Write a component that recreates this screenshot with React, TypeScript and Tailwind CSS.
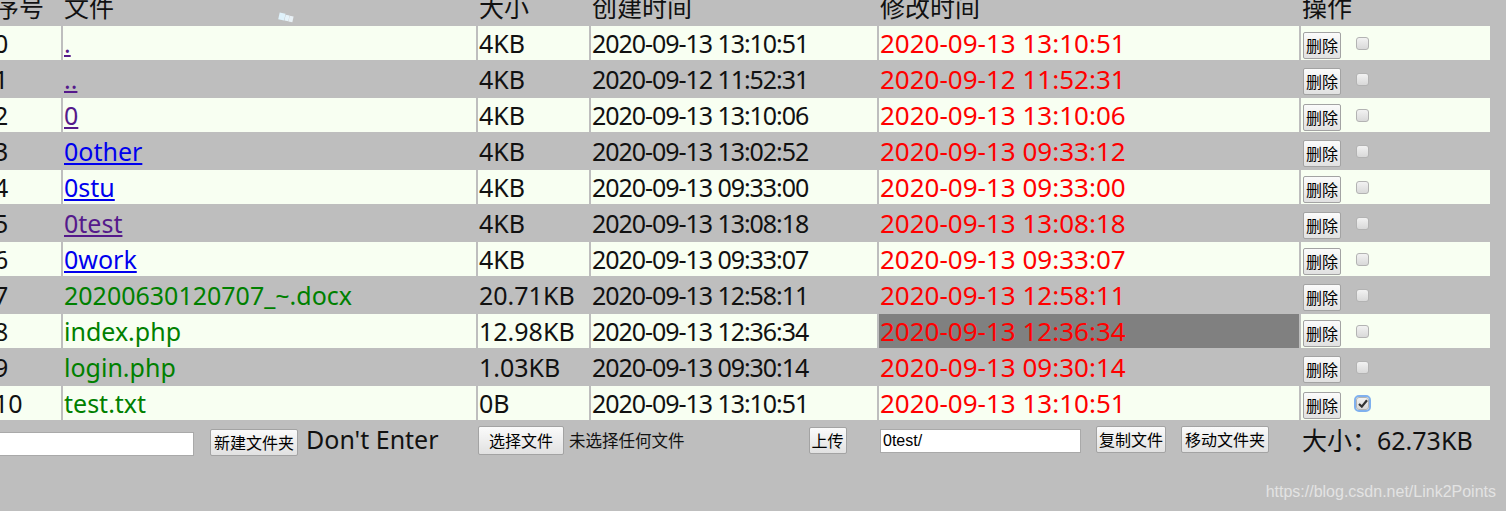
import clsx from "clsx";

type Row = {
    no: number;
    name: string;
    kind: "visited" | "link" | "file";
    size: string;
    created: string;
    modified: string;
    hover?: boolean;
    checked?: boolean;
};

const rows: Row[] = [
    { no: 0, name: ".", kind: "visited", size: "4KB", created: "2020-09-13 13:10:51", modified: "2020-09-13 13:10:51" },
    { no: 1, name: "..", kind: "visited", size: "4KB", created: "2020-09-12 11:52:31", modified: "2020-09-12 11:52:31" },
    { no: 2, name: "0", kind: "visited", size: "4KB", created: "2020-09-13 13:10:06", modified: "2020-09-13 13:10:06" },
    { no: 3, name: "0other", kind: "link", size: "4KB", created: "2020-09-13 13:02:52", modified: "2020-09-13 09:33:12" },
    { no: 4, name: "0stu", kind: "link", size: "4KB", created: "2020-09-13 09:33:00", modified: "2020-09-13 09:33:00" },
    { no: 5, name: "0test", kind: "visited", size: "4KB", created: "2020-09-13 13:08:18", modified: "2020-09-13 13:08:18" },
    { no: 6, name: "0work", kind: "link", size: "4KB", created: "2020-09-13 09:33:07", modified: "2020-09-13 09:33:07" },
    { no: 7, name: "20200630120707_~.docx", kind: "file", size: "20.71KB", created: "2020-09-13 12:58:11", modified: "2020-09-13 12:58:11" },
    { no: 8, name: "index.php", kind: "file", size: "12.98KB", created: "2020-09-13 12:36:34", modified: "2020-09-13 12:36:34", hover: true },
    { no: 9, name: "login.php", kind: "file", size: "1.03KB", created: "2020-09-13 09:30:14", modified: "2020-09-13 09:30:14" },
    { no: 10, name: "test.txt", kind: "file", size: "0B", created: "2020-09-13 13:10:51", modified: "2020-09-13 13:10:51", checked: true },
];

const btn = "border border-[#a3a3a3] rounded-[2px] bg-linear-to-b from-[#fbfbfb] to-[#e1e1e1] py-px text-[16px] leading-[23px] text-black font-['Noto_Sans_CJK_SC',sans-serif]";

const Check = ({ checked }: { checked?: boolean }) => (
    <span
        className={clsx(
            "inline-flex items-center justify-center w-[13px] h-[13px] rounded-[3px] border border-[#b3b3b3] bg-linear-to-b from-[#f2f2f2] to-[#d9d9d9]",
            checked && "outline-2 outline-[#7fb0ee] outline-offset-0"
        )}
    >
        {checked && (
            <svg width="10" height="9" viewBox="0 0 10 9">
                <path d="M1 5 L3.8 7.6 L9 1.2" fill="none" stroke="#333" strokeWidth="2.2" />
            </svg>
        )}
    </span>
);

const cell = "p-px h-[34px] leading-[32px] align-middle whitespace-nowrap overflow-hidden";

export default function App() {
    return (
        <div className="relative min-h-[511px] bg-[#bebebe] overflow-hidden text-[25px] text-[#111] font-['Noto_Sans','Noto_Sans_CJK_SC',sans-serif]">
            <svg className="absolute left-[278px] top-[12px]" width="20" height="12" viewBox="0 0 20 12">
                <rect x="1" y="1" width="6" height="7" fill="#dff2fb" transform="rotate(12 4 4)" />
                <rect x="7" y="3" width="4" height="6" fill="#e6f3fa" transform="rotate(12 9 6)" />
                <rect x="11" y="4" width="4" height="6" fill="#e9f1f6" transform="rotate(12 13 7)" />
            </svg>
            <table className="-ml-[9px] -mt-[12px] w-[1501px] table-fixed border-separate border-spacing-[2px]">
                <thead>
                    <tr>
                        <th className={clsx(cell, "w-[68px] text-left font-normal")}>序号</th>
                        <th className={clsx(cell, "w-[413px] text-left font-normal")}>文件</th>
                        <th className={clsx(cell, "w-[111px] text-left font-normal")}>大小</th>
                        <th className={clsx(cell, "w-[286px] text-left font-normal")}>创建时间</th>
                        <th className={clsx(cell, "w-[420px] text-left font-normal")}>修改时间</th>
                        <th className={clsx(cell, "w-[189px] text-left font-normal")}>操作</th>
                    </tr>
                </thead>
                <tbody>
                    {rows.map((r) => {
                        const bg = r.no % 2 === 0 ? "bg-[#f8fff2]" : "";
                        return (
                            <tr key={r.no}>
                                <td className={clsx(cell, bg)}>{r.no}</td>
                                <td className={clsx(cell, bg)}>
                                    {r.kind === "file" ? (
                                        <span className="text-[#008000]">{r.name}</span>
                                    ) : (
                                        <a href="#" className={clsx("underline", r.kind === "visited" ? "text-[#551a8b]" : "text-[#0000ee]")}>
                                            {r.name}
                                        </a>
                                    )}
                                </td>
                                <td className={clsx(cell, bg)}>{r.size}</td>
                                <td className={clsx(cell, bg, "tracking-[-1.05px]")}>{r.created}</td>
                                <td className={clsx(cell, r.hover ? "bg-[#808080]" : bg, "text-[26px] text-[#ff0000]")}>{r.modified}</td>
                                <td className={clsx(cell, bg)}>
                                    <div className="flex items-end h-[32px]">
                                        <button className={clsx(btn, "ml-px px-[2px]")}>删除</button>
                                        <span className="ml-[15px] mb-[9px] flex">
                                            <Check checked={r.checked} />
                                        </span>
                                    </div>
                                </td>
                            </tr>
                        );
                    })}
                    <tr>
                        <td colSpan={2} className={cell}>
                            <div className="flex items-baseline">
                                <input
                                    type="text"
                                    className="w-[200px] h-[24px] bg-white border border-[#a9a9a9] px-[2px] text-[16px] font-['Liberation_Sans',sans-serif]"
                                />
                                <button className={clsx(btn, "ml-[16px] px-[3px]")}>新建文件夹</button>
                                <span className="ml-[8px]">Don't Enter</span>
                            </div>
                        </td>
                        <td colSpan={2} className={cell}>
                            <div className="flex items-baseline">
                                <button className={clsx(btn, "-ml-px px-[10px] leading-[25px] border-[#9a9a9a]")}>选择文件</button>
                                <span className="ml-[5px] text-[16.5px] font-['Noto_Sans_CJK_SC',sans-serif]">未选择任何文件</span>
                                <button className={clsx(btn, "ml-[124px] px-[2px]")}>上传</button>
                            </div>
                        </td>
                        <td className={cell}>
                            <div className="flex items-baseline">
                                <input
                                    type="text"
                                    defaultValue="0test/"
                                    className="w-[201px] h-[24px] bg-white border border-[#a9a9a9] px-[2px] text-[16px] text-black font-['Liberation_Sans',sans-serif]"
                                />
                                <button className={clsx(btn, "ml-[15px] px-[2px]")}>复制文件</button>
                                <button className={clsx(btn, "ml-[15px] px-[3px]")}>移动文件夹</button>
                            </div>
                        </td>
                        <td className={cell}>大小：62.73KB</td>
                    </tr>
                </tbody>
            </table>
            <div className="absolute right-[10px] bottom-[9px] text-[16px] leading-[20px] text-[#e3e3e3] font-['Liberation_Sans',sans-serif]">
                https://blog.csdn.net/Link2Points
            </div>
        </div>
    );
}
